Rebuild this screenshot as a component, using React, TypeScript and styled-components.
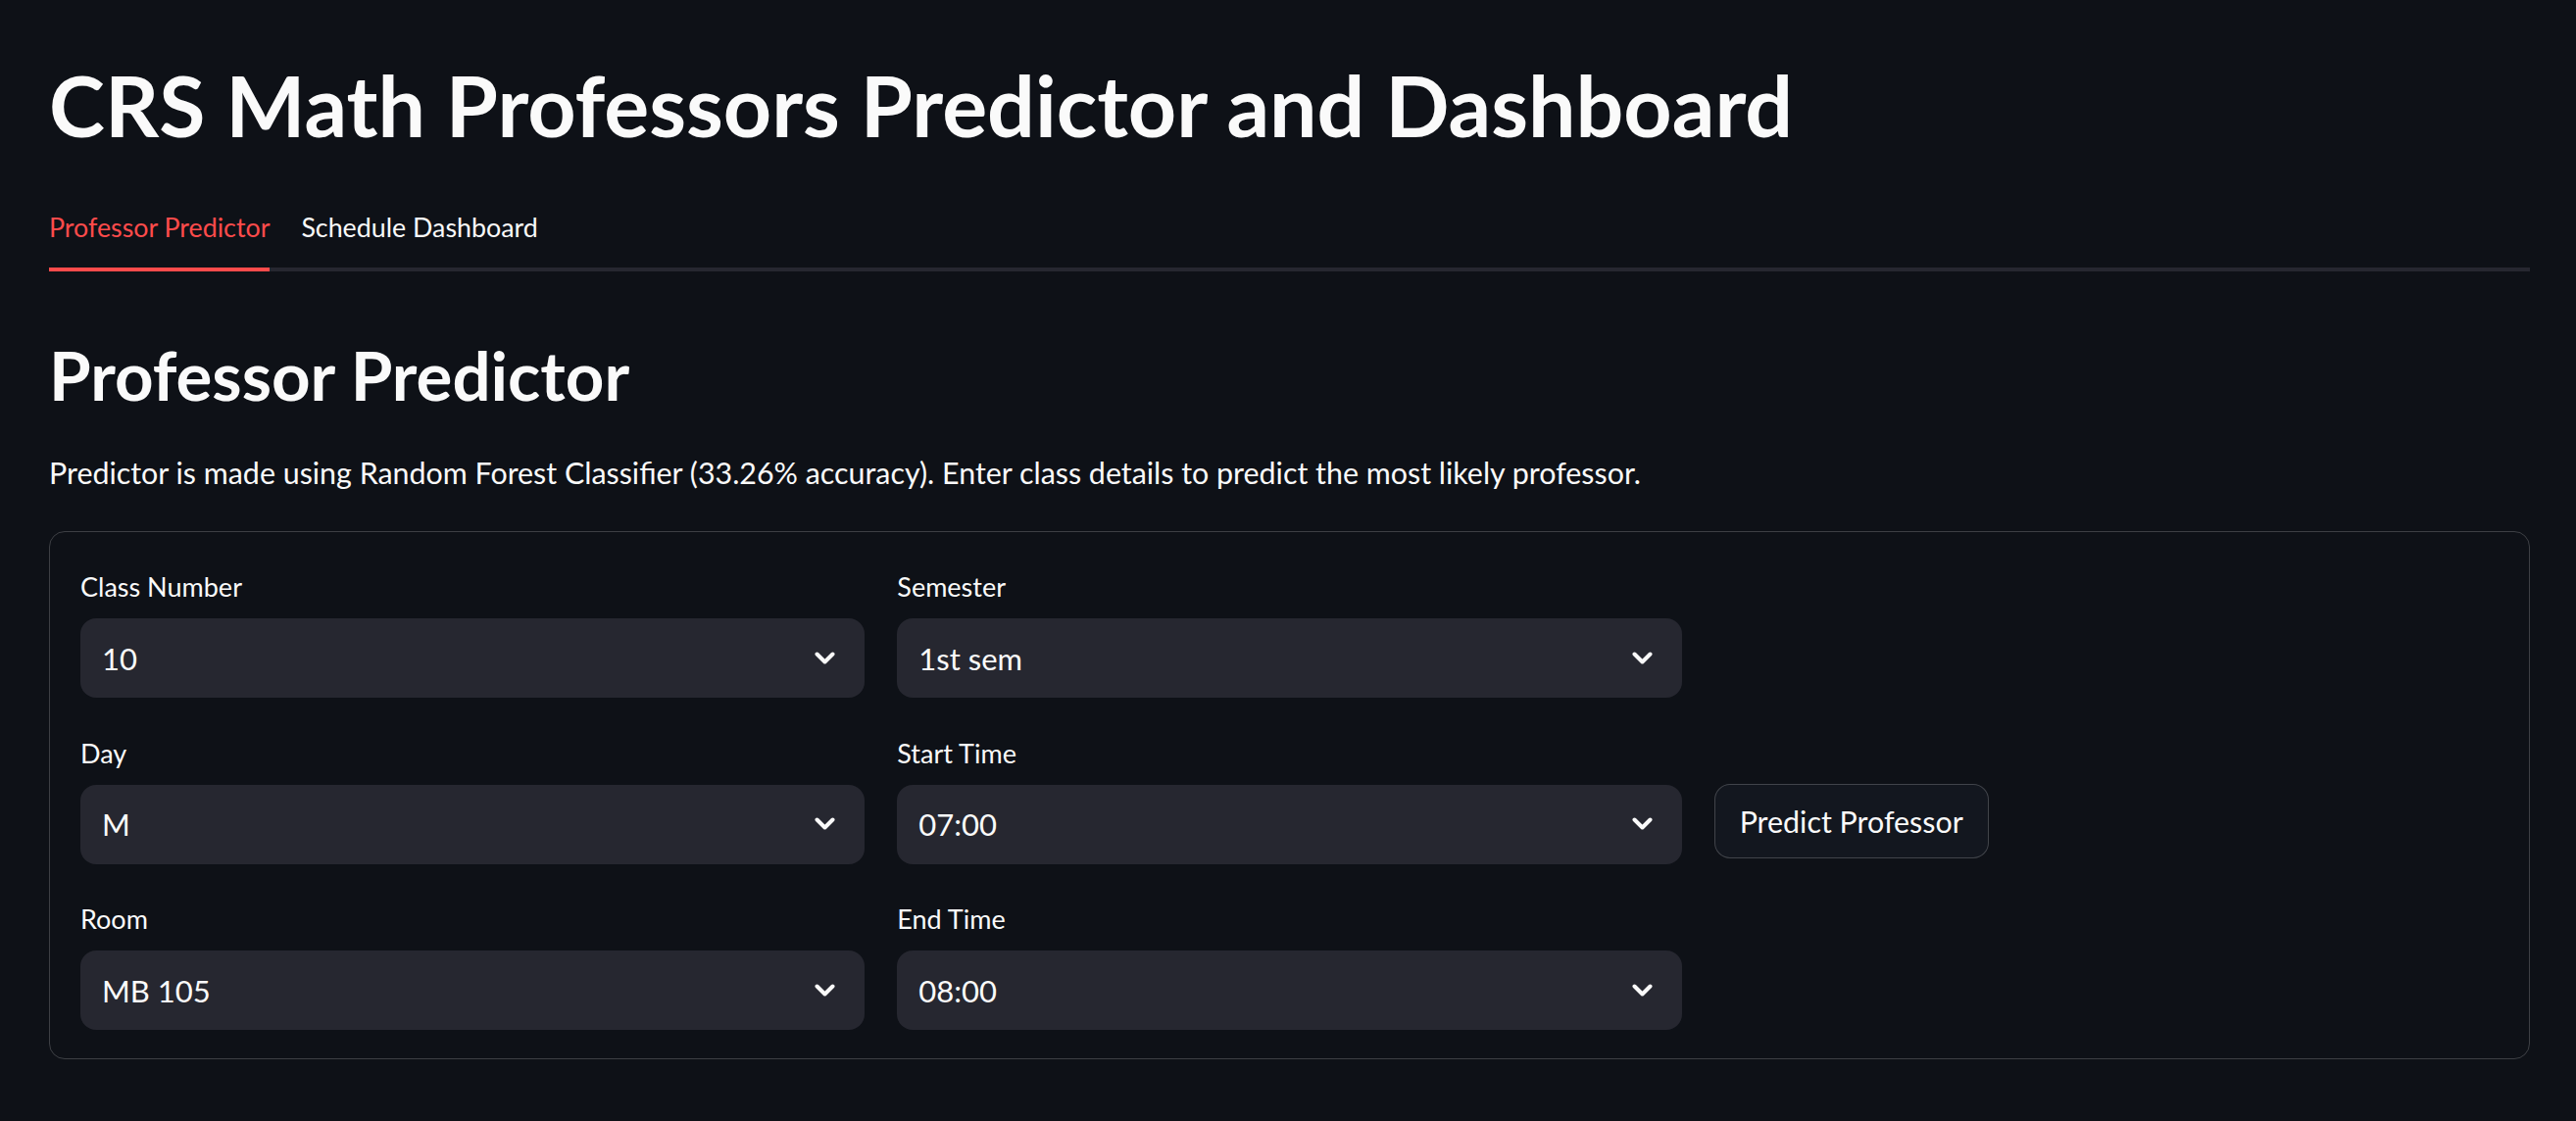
import React from "react";
import styled, { createGlobalStyle } from "styled-components";

const GlobalStyle = createGlobalStyle`
  html, body {
    margin: 0;
    padding: 0;
    background: #0e1117;
  }
  body {
    font-family: Lato, "Noto Sans", sans-serif;
    color: #fafafa;
  }
  * { box-sizing: border-box; }
`;

const Main = styled.main`
  padding: 57px 47px 64px 50px;
  min-height: 1144px;
  background: #0e1117;
`;

const Title = styled.h1`
  margin: 0;
  font-size: 86px;
  line-height: 100px;
  font-weight: 700;
  color: #fafafa;
  white-space: nowrap;
`;

const TabList = styled.div`
  display: flex;
  gap: 32px;
  margin-top: 57px;
  border-bottom: 4px solid #262730;
`;

const Tab = styled.div<{ $active?: boolean }>`
  font-size: 26.8px;
  line-height: 36px;
  padding-bottom: 23px;
  margin-bottom: -4px;
  border-bottom: 4px solid ${(p) => (p.$active ? "#ff4b4b" : "transparent")};
  color: ${(p) => (p.$active ? "#ff4b4b" : "#fafafa")};
  white-space: nowrap;
`;

const SubTitle = styled.h2`
  margin: 66px 0 0;
  font-size: 69px;
  line-height: 80px;
  font-weight: 700;
  color: #fafafa;
`;

const Paragraph = styled.p`
  margin: 35px 0 0;
  font-size: 30.4px;
  line-height: 48px;
  color: #fafafa;
`;

const FormBox = styled.div`
  margin-top: 36px;
  border: 1px solid rgba(250, 250, 250, 0.2);
  border-radius: 16px;
  padding: 32px 31px 29px;
  display: grid;
  grid-template-columns: repeat(3, 1fr);
  column-gap: 33px;
  row-gap: 32.5px;
`;

const Field = styled.div`
  display: flex;
  flex-direction: column;
  gap: 8px;
`;

const Label = styled.label`
  font-size: 27px;
  line-height: 48px;
  height: 48px;
  color: #fafafa;
`;

const Select = styled.div`
  height: 81px;
  border-radius: 16px;
  background: #262730;
  display: flex;
  align-items: center;
  justify-content: space-between;
  padding: 0 30px 0 22px;
  font-size: 31px;
  color: #fafafa;
`;

const Chevron = styled.svg`
  width: 21px;
  height: 14px;
  flex: none;
`;

const ButtonCell = styled.div`
  display: flex;
  align-items: flex-start;
  padding-top: 55px;
`;

const Button = styled.button`
  height: 76px;
  padding: 0 25px;
  border: 1px solid rgba(250, 250, 250, 0.2);
  border-radius: 16px;
  background: #13171f;
  color: #fafafa;
  font-family: inherit;
  font-size: 30.4px;
  cursor: pointer;
`;

const Empty = styled.div``;

function SelectBox({ label, value }: { label: string; value: string }) {
  return (
    <Field>
      <Label>{label}</Label>
      <Select>
        <span>{value}</span>
        <Chevron viewBox="0 0 21 14" fill="none">
          <polyline
            points="2.5,2.5 10.5,10.5 18.5,2.5"
            stroke="#fafafa"
            strokeWidth="4"
            strokeLinecap="round"
            strokeLinejoin="round"
          />
        </Chevron>
      </Select>
    </Field>
  );
}

export default function App() {
  return (
    <>
      <GlobalStyle />
      <Main>
        <Title>CRS Math Professors Predictor and Dashboard</Title>
        <TabList>
          <Tab $active>Professor Predictor</Tab>
          <Tab>Schedule Dashboard</Tab>
        </TabList>
        <SubTitle>Professor Predictor</SubTitle>
        <Paragraph>
          Predictor is made using Random Forest Classifier (33.26% accuracy). Enter class details to predict the most likely professor.
        </Paragraph>
        <FormBox>
          <SelectBox label="Class Number" value="10" />
          <SelectBox label="Semester" value="1st sem" />
          <Empty />
          <SelectBox label="Day" value="M" />
          <SelectBox label="Start Time" value="07:00" />
          <ButtonCell>
            <Button>Predict Professor</Button>
          </ButtonCell>
          <SelectBox label="Room" value="MB 105" />
          <SelectBox label="End Time" value="08:00" />
          <Empty />
        </FormBox>
      </Main>
    </>
  );
}
